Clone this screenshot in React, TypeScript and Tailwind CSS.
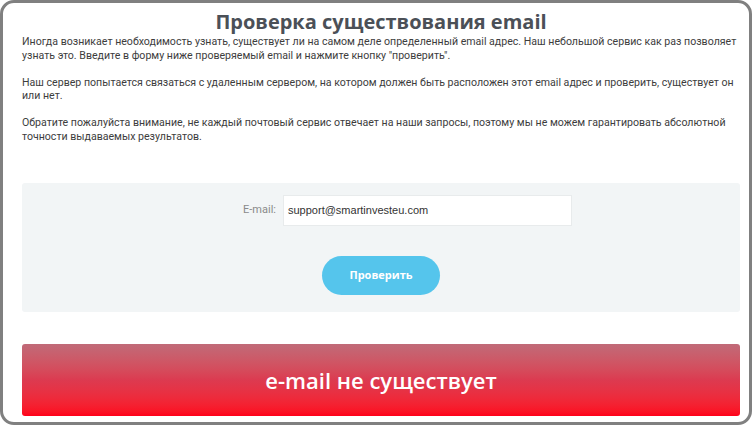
import React from 'react';

const paragraphs = [
  'Иногда возникает необходимость узнать, существует ли на самом деле определенный email адрес. Наш небольшой сервис как раз позволяет узнать это. Введите в форму ниже проверяемый email и нажмите кнопку "проверить".',
  'Наш сервер попытается связаться с удаленным сервером, на котором должен быть расположен этот email адрес и проверить, существует он или нет.',
  'Обратите пожалуйста внимание, не каждый почтовый сервис отвечает на наши запросы, поэтому мы не можем гарантировать абсолютной точности выдаваемых результатов.',
];

const App: React.FC = () => {
  return (
    <div className="w-[754px] h-[428px] bg-white overflow-hidden">
      <div className="w-[752px] h-[425px] border-[3px] border-[#808080] rounded-[14px] bg-white pl-[19px] pr-[9px] flex flex-col">
        <h1 className="mt-[7px] text-center text-[20px] leading-[24px] font-bold text-[#4b5057] font-['Open_Sans',sans-serif]">
          Проверка существования email
        </h1>

        <div className="mt-[1px] flex flex-col gap-[13.5px] font-['Roboto',sans-serif] text-[10.6px] text-[#3d3d3d]">
          {paragraphs.map((p, i) => (
            <p key={i} className="leading-[13.5px]">{p}</p>
          ))}
        </div>

        <div className="mt-[40px] h-[129px] shrink-0 bg-[#f2f5f6] rounded-[3px] flex flex-col items-center pt-[12px]">
          <div className="flex items-center w-full">
            <label className="w-[261px] pr-[7px] text-right text-[11px] text-[#8a8a8a] font-['Roboto',sans-serif]">
              E-mail:
            </label>
            <div className="w-[289px] h-[31px] bg-white border border-[#e8ebec] flex items-center px-[4px] text-[11px] text-[#333] font-['Liberation_Sans',sans-serif]">
              support@smartinvesteu.com
            </div>
          </div>
          <button className="mt-[30px] w-[118px] h-[39px] rounded-full bg-[#55c5ec] text-white text-[11px] font-bold font-['Open_Sans',sans-serif]">
            Проверить
          </button>
        </div>

        <div className="mt-[32px] h-[72px] shrink-0 rounded-[3px] bg-gradient-to-b from-[#c06a78] via-[#dc3a50] to-[#ff0019] flex items-center justify-center">
          <span className="text-white text-[22px] font-semibold font-['Open_Sans',sans-serif]">e-mail не существует</span>
        </div>
      </div>
    </div>
  );
};

export default App;
